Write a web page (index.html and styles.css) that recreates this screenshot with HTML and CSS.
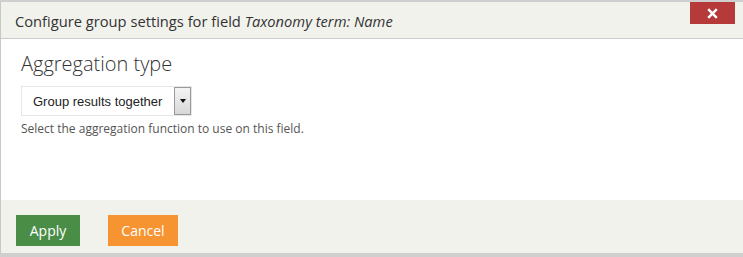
FILE: index.html
```html
<!DOCTYPE html>
<html>
<head>
<meta charset="utf-8">
<link rel="stylesheet" href="styles.css">
</head>
<body>
<div class="dialog">
  <div class="dialog-header">
    <div class="dialog-title">Configure group settings for field <em>Taxonomy term: Name</em></div>
    <button class="close-btn" type="button" aria-label="Close">
      <svg width="11" height="11" viewBox="0 0 11 11"><path d="M1.2 1.2 L9.8 9.8 M9.8 1.2 L1.2 9.8" stroke="#fff" stroke-width="2.4" fill="none"/></svg>
    </button>
  </div>
  <div class="dialog-body">
    <h2 class="section-title">Aggregation type</h2>
    <div class="select">
      <span class="select-value">Group results together</span>
      <span class="select-arrow"><span class="tri"></span></span>
    </div>
    <div class="description">Select the aggregation function to use on this field.</div>
  </div>
  <div class="dialog-footer">
    <button class="btn btn-apply" type="button">Apply</button>
    <button class="btn btn-cancel" type="button">Cancel</button>
  </div>
</div>
</body>
</html>
```
FILE: styles.css
```css
html, body {
  margin: 0;
  padding: 0;
}
body {
  background: #cfcfcf;
  font-family: "Open Sans", sans-serif;
  color: #333;
  width: 743px;
  height: 257px;
  overflow: hidden;
}
.dialog {
  margin-top: 2px;
  border-left: 1px solid #c8c8c8;
  background: #fff;
}
.dialog-header {
  height: 36px;
  background: #f2f2ed;
  border-bottom: 1px solid #cccccc;
  display: flex;
  justify-content: space-between;
  align-items: flex-start;
}
.dialog-title {
  font-size: 14.7px;
  line-height: 20px;
  padding: 9px 0 0 14px;
  color: #333;
  white-space: nowrap;
}
.dialog-title em {
  font-style: italic;
}
.close-btn {
  width: 45px;
  height: 22px;
  margin-right: 8px;
  background: #b73a3a;
  border: 0;
  padding: 0;
  display: flex;
  align-items: center;
  justify-content: center;
  cursor: pointer;
}
.dialog-body {
  height: 161px;
  background: #fff;
  padding: 0 0 0 20px;
  box-sizing: border-box;
  overflow: hidden;
}
.section-title {
  margin: 0;
  padding-top: 11px;
  font-size: 20px;
  font-weight: 300;
  line-height: 28px;
  color: #333;
}
.select {
  margin-top: 8px;
  width: 171px;
  height: 30px;
  box-sizing: border-box;
  border: 1px solid #e6e6e6;
  background: #fff;
  display: flex;
  align-items: center;
  justify-content: space-between;
}
.select-value {
  font-family: "Liberation Sans", Arial, sans-serif;
  font-size: 13px;
  color: #222;
  padding-left: 11px;
}
.select-arrow {
  width: 17px;
  height: 28px;
  box-sizing: border-box;
  border: 1px solid #9a9a9a;
  background: linear-gradient(#f4f4f4, #d8d8d8);
  display: flex;
  align-items: center;
  justify-content: center;
}
.tri {
  width: 0;
  height: 0;
  border-left: 3.5px solid transparent;
  border-right: 3.5px solid transparent;
  border-top: 4px solid #111;
}
.description {
  margin-top: 4px;
  font-size: 12px;
  line-height: 17px;
  color: #555;
}
.dialog-footer {
  height: 53px;
  background: #f2f2ed;
  box-sizing: border-box;
  padding: 15px 0 0 15px;
  display: flex;
  align-items: flex-start;
  gap: 28px;
}
.btn {
  height: 31px;
  border: 0;
  color: #fff;
  font-family: "Open Sans", sans-serif;
  font-size: 14px;
  padding: 0;
  cursor: pointer;
}
.btn-apply {
  width: 64px;
  background: #4a8d47;
}
.btn-cancel {
  width: 70px;
  background: #f79432;
}
```
